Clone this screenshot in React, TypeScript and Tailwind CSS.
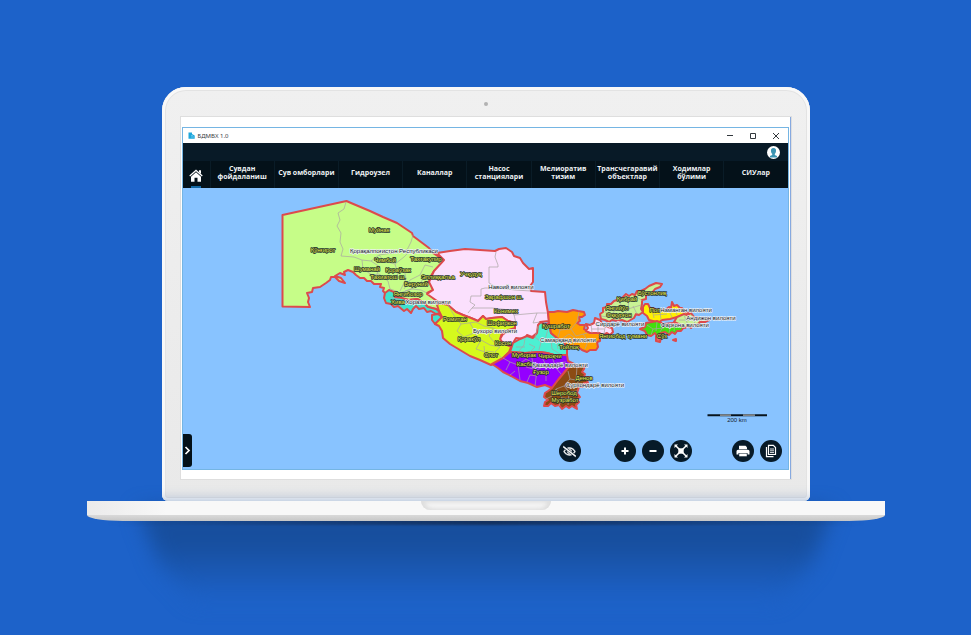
import { FaRegEyeSlash } from 'react-icons/fa';
import type { ReactNode } from 'react';

const sections = [
  ['Сувдан', 'фойдаланиш'],
  ['Сув омборлари'],
  ['Гидроузел'],
  ['Каналлар'],
  ['Насос', 'станциялари'],
  ['Мелиоратив', 'тизим'],
  ['Трансчегаравий', 'объектлар'],
  ['Ходимлар', 'бўлими'],
  ['СИУлар'],
];

const regions = [
  { name: 'Қорақалпоғистон', fill: '#c6fd88', d: 'M282.500 215L346.500 201L351 203L370 211L383 217L397 223L403 227L412 233L413 236L421 242L429 248L433 253L444 260L440 266L434 271L431 276L429 282L432 286L433 290L427 293L436 300L441 306L444 312L441 314L436 309L428 307L424 303L418 299L408 300L400 298L393 297L385 293L383 291L384 288L380 287L381 284L374 284L371 281L367 281L364 278L360 278L356 275L353 272L348 270L344 272L345 275L340 273L335 276L341 278L345 283L339 281L335 277L331 277L330 280L326 283L320 287L313 288L312 292L307 293L309 298L308 302L310 307L282.500 306.500Z' },
  { name: 'Хоразм', fill: '#3fe3cf', d: 'M385 293L389 290L394 292L395 297L402 298L409 300L417 299L424 303L428 307L436 309L441 313L436 314L431 311L427 312L424 308L419 309L416 306L413 309L411 313L407 309L404 311L398 306L394 307L391 304L386 303L384 298Z' },
  { name: 'Тупроққалъа', fill: '#3fe3cf', d: 'M432 315L438 314L442 317L439 321L435 324L432 320Z' },
  { name: 'Навоий', fill: '#fbe0fd', d: 'M437 253L450 251L465 249L480 250L495 251L499 249L506 248L512 252L514 256L520 258L523 263L529 269L533 268L533 282L530 286L531 291L545 292L546 302L548 313L549 321L540 322L537 333L532 337L527 335L525 339L516 338L513 343L511 347L507 344L501 343L500 339L503 334L511 330L515 329L515 323L508 321L502 317L492 318L486 319L483 316L478 321L471 318L463 315L456 312L450 307L440 303L427 294L433 290L429 282L434 271L444 260Z' },
  { name: 'Бухоро', fill: '#d6f91d', d: 'M437 305L440 303L448 305L456 312L463 315L471 318L478 321L483 316L486 319L492 318L502 317L508 321L515 323L515 328L508 330L502 333L500 339L503 343L511 347L509 352L503 358L496 363L491 365L480 360L470 356L460 350L450 344L443 338L442 331L439 326L435 324L442 317L439 311Z' },
  { name: 'Самарқанд', fill: '#4cf0d2', d: 'M541 322L545 325L549 323L551 333L557 338L564 342L567 349L567 355L554 355L547 353L540 352L525 353L510 352L513 343L520 339L527 336L533 338L537 333L538 325Z' },
  { name: 'Жиззах', fill: '#ff9f00', d: 'M548 312L554 312L558 311L567 312L573 310L578 311L584 312L585 315L582 317L579 317L580 321L577 323L580 325L585 325L584 329L588 331L592 333L597 333L600 331L606 333L606 336L600 337L600 341L597 342L598 347L596 350L590 350L587 352L582 350L577 346L567 347L564 342L557 338L551 333L549 323Z' },
  { name: 'Сирдарё', fill: '#fbe0fd', d: 'M586 324L590 325L594 323L595 318L600 320L604 326L608 327L612 328L613 332L610 335L607 333L603 335L599 333L590 333L586 331L588 328Z' },
  { name: 'Тошкент', fill: '#c9f294', d: 'M600 314L603 312L603 308L607 307L607 304L611 304L614 301L620 299L623 297L626 294L629 296L632 294L635 295L637 291L641 291L645 289L649 286L656 283L662 284L660 287L655 289L651 294L646 295L646 299L642 300L642 304L641 309L643 312L639 315L636 314L634 318L627 322L622 320L617 321L612 320L609 322L605 320L601 319Z' },
  { name: 'Наманган', fill: '#fff100', d: 'M643 307L645 304L648 304L650 308L653 308L657 310L661 309L664 311L669 307L671 308L672 302L674 306L677 305L680 308L682 308L684 312L690 313L684 316L677 317L670 319L662 320L658 323L653 321L649 320L647 316L643 313Z' },
  { name: 'Андижон', fill: '#c9f294', d: 'M677 317L684 314L687 315L691 313L694 317L697 317L700 320L704 318L709 320L705 322L700 322L697 325L694 325L691 328L688 326L685 328L681 325L674 322Z' },
  { name: 'Фарғона', fill: '#42e00c', d: 'M640 329L645 327L646 323L652 322L657 321L664 324L673 323L684 327L681 331L677 331L675 334L672 332L669 335L665 332L661 333L657 336L655 333L651 336L647 335L645 331Z' },
  { name: 'Сўх', fill: '#ec6a60', d: 'M656 336L661 337L660 342L656 341Z' },
  { name: 'Шоҳимардон', fill: '#ec6a60', d: 'M673 340L676 339L676 341Z' },
  { name: 'Қашқадарё', fill: '#9400ff', d: 'M492 364L503 358L510 352L525 353L540 352L547 353L554 355L567 355L568 361L574 364L568 368L563 374L558 380L552 388L545 385L537 387L528 383L520 381L511 376L503 372L498 368Z' },
  { name: 'Сурхондарё', fill: '#8b4b13', d: 'M574 364L577 367L580 366L585 365L584 369L582 372L585 374L584 377L589 377L587 380L588 383L584 383L583 387L579 387L577 393L580 397L577 399L579 402L576 405L577 409L572 406L569 408L566 406L562 409L559 405L555 406L551 403L548 406L544 406L545 402L548 400L544 397L545 393L548 391L552 388L558 380L563 374L568 368Z' },
];

const districtLines = [
  'M346 202L344 209L338 213L340 220L337 226L341 233L340 242L343 249L341 256L354 257L362 260L371 261L379 255L392 253L407 250L411 242L413 235',
  'M362 260L363 269L372 275L379 274L388 281L390 289M371 261L380 267L377 274M379 255L384 261L395 264L404 257L410 251M395 264L398 274L391 280M404 268L406 279L400 291M433 267L425 265L420 275L410 280L404 289M425 275L419 286L405 291M390 289L396 291L400 293L412 289L421 290L427 293',
  'M390 297L399 300L401 307M404 300L410 304L418 303M411 306L413 299M418 300L421 307',
  'M496 252L495 257L498 265L498 267L489 267L489 283L498 288L485 288L481 289L481 296L471 296L470 302L475 305L472 308L492 308L510 310L514 315L537 313L547 313M498 288L515 290L531 291M514 315L516 323M537 313L533 323L540 322M472 308L468 313',
  'M448 305L455 317L461 324L457 331L464 337M461 324L476 322L484 326L493 328L502 333M464 337L474 333L481 340L490 345L500 347M481 340L476 349L485 352L489 360M493 328L489 336L494 342M500 347L495 352L502 358M484 346L485 356M494 352L486 351M470 323L475 332M501 321L508 326L515 325',
  'M525 338L524 345L519 351M538 326L535 337L541 342L539 350M541 342L551 339L560 343M548 329L545 340M551 339L552 349L560 354M529 344L535 347L530 352M556 338L558 349M516 347L525 347',
  'M560 330L571 329L577 322L579 312M571 329L576 336L587 333M562 339L569 334L575 338L573 346M583 334L588 341L585 349M589 341L597 341M553 324L560 330L558 337',
  'M591 324L592 333M598 322L598 333M605 327L604 334M592 329L604 329',
  'M607 306L615 310L621 305L628 309L641 305M615 310L611 316L618 320M621 305L618 300M628 309L623 316L631 318M628 309L629 298M604 311L611 316M633 306L637 314M642 301L636 296M601 316L608 317',
  'M652 309L654 318M660 311L661 320M668 309L672 317M674 308L677 315M654 315L667 314M684 315L688 325M692 315L695 324M679 320L697 320',
  'M647 325L653 329L651 335M657 322L656 331M664 325L660 332M671 324L669 333M675 324L674 331M653 329L664 328',
  'M503 358L510 362L506 370M510 362L518 365L526 359L533 363L531 354M518 365L520 380M526 367L537 370L535 386M537 370L546 365L541 356M546 365L556 368L561 374M546 365L546 381M552 357L556 368M515 371L510 375M556 363L566 362M527 382L530 375L537 376',
  'M568 371L570 379L564 386L569 392L577 391M564 386L556 389L552 396L546 399M577 367L576 380L570 379M556 389L562 398L559 406M569 392L568 405M562 398L575 399M584 378L577 383',
];

const districtLabels: [string, number, number][] = [
  ['Муйнак', 379, 232],
  ['Қўнғирот', 323, 252],
  ['Чимбой', 385, 262],
  ['Тахтакупир', 426, 261],
  ['Шуманай', 367, 271],
  ['Қораўзак', 398, 272],
  ['Тахиатош ш.', 388, 279],
  ['Эллиққалъа', 438, 279],
  ['Беруний', 416, 286],
  ['Янгибозор', 408, 296],
  ['Хива', 398, 304],
  ['Учқудуқ', 471, 276],
  ['Зарафшон ш.', 504, 299],
  ['Конимех', 506, 313],
  ['Ромитан', 455, 321],
  ['Шофиркон', 502, 325],
  ['Қоракўл', 469, 341],
  ['Косон', 503, 345],
  ['Олот', 491, 357],
  ['Қушработ', 556, 328],
  ['Тойлоқ', 569, 349],
  ['Муборак', 524, 357],
  ['Чироқчи', 550, 358],
  ['Касби', 525, 366],
  ['Ғузор', 541, 374],
  ['Денов', 584, 380],
  ['Шеробод', 564, 395],
  ['Музработ', 565, 402],
  ['Бўстонлиқ', 652, 295],
  ['Қибрай', 627, 301],
  ['Янгийўл', 617, 310],
  ['Оққурғон', 619, 317],
  ['Янгиобод тумани', 623, 338],
  ['Поп', 655, 312],
  ['Сўх', 662, 338],
];

const provinceLabels: [string, number, number][] = [
  ['Қорақалпоғистон Республикаси', 394, 253],
  ['Хоразм вилояти', 428, 304],
  ['Навоий вилояти', 511, 289],
  ['Бухоро вилояти', 495, 333],
  ['Самарқанд вилояти', 568, 342],
  ['Қашқадарё вилояти', 560, 367],
  ['Сурхондарё вилояти', 595, 387],
  ['Сирдарё вилояти', 620, 326],
  ['Наманган вилояти', 686, 312],
  ['Андижон вилояти', 711, 320],
  ['Фарғона вилояти', 685, 327],
];

function RegionMap() {
  return (
    <svg viewBox="183 188 605 281" className="block h-auto w-full bg-[#88c3ff]" role="img" aria-label="Харита">
      {regions.map((r) => (
        <path key={r.name} d={r.d} fill={r.fill} stroke="#dd4a4c" strokeWidth="2" strokeLinejoin="round" />
      ))}
      {districtLines.map((d) => (
        <path key={d} d={d} fill="none" stroke="#a9a5a2" strokeWidth="0.7" strokeLinejoin="round" />
      ))}
      <g className="font-['Liberation_Sans','DejaVu_Sans',sans-serif] text-[6px] [paint-order:stroke]" textAnchor="middle" strokeLinejoin="round">
        <g fill="#eef04c" stroke="#23302c" strokeWidth="1.5">
          {districtLabels.map(([t, x, y]) => (
            <text key={t} x={x} y={y}>{t}</text>
          ))}
        </g>
        <g fill="#14171c" stroke="#eef1f5" strokeWidth="1.3">
          {provinceLabels.map(([t, x, y]) => (
            <text key={t} x={x} y={y}>{t}</text>
          ))}
        </g>
        <text x="737" y="422" fill="#15222e">200 km</text>
      </g>
      <path d="M707.500 415.200H767" stroke="#08141d" strokeWidth="2" />
      <path d="M720 415.200H731M743 415.200H755" stroke="#a9a9a9" strokeWidth="1.200" />
    </svg>
  );
}

function RoundButton({ label, children }: { label: string; children: ReactNode }) {
  return (
    <button type="button" aria-label={label} className="flex size-[22px] items-center justify-center rounded-full bg-[#071a28] text-white">
      {children}
    </button>
  );
}

function MapControls() {
  return (
    <div className="absolute right-[6px] bottom-[7px] flex">
      <RoundButton label="Яшириш">
        <FaRegEyeSlash className="size-[13px]" stroke="currentColor" strokeWidth="24" />
      </RoundButton>
      <div className="ml-[33px] flex gap-[6px]">
        <RoundButton label="Катталаштириш">
          <svg viewBox="0 0 12 12" className="size-3"><path d="M6 2.500V9.500M2.500 6H9.500" stroke="currentColor" strokeWidth="2" /></svg>
        </RoundButton>
        <RoundButton label="Кичиклаштириш">
          <svg viewBox="0 0 12 12" className="size-3"><path d="M2.500 6H9.500" stroke="currentColor" strokeWidth="2" /></svg>
        </RoundButton>
        <RoundButton label="Тўлиқ экран">
          <svg viewBox="0 0 14 14" className="size-[14px]" fill="currentColor">
            <path d="M4.300 4.300H9.700V9.700H4.300Z" />
            <path d="M2 2L12 12M12 2L2 12" stroke="currentColor" strokeWidth="1.500" />
            <path d="M.500 .500H4L.500 4ZM13.500 .500V4L10 .500ZM.500 13.500V10L4 13.500ZM13.500 13.500H10L13.500 10Z" />
          </svg>
        </RoundButton>
      </div>
      <div className="ml-10 flex gap-[6px]">
        <RoundButton label="Чоп этиш">
          <svg viewBox="0 0 14 12" className="h-3 w-[14px]" fill="currentColor">
            <path d="M3 .800H9.500L11 2.300V4.300H3Z" />
            <path d="M2 4.700H12A1.500 1.500 0 0 1 13.500 6.200V9.500H11.500V8H2.500V9.500H.500V6.200A1.500 1.500 0 0 1 2 4.700Z" />
            <path d="M3.200 8.500H10.800V11.300H3.200Z" />
          </svg>
        </RoundButton>
        <RoundButton label="Нусхалаш">
          <svg viewBox="0 0 12 14" className="h-[14px] w-3" fill="none" stroke="currentColor">
            <path d="M3.500 1.300H8.300L10.500 3.500V10.500H3.500Z" strokeWidth="1.200" />
            <path d="M1.500 3V12.700H8.500" strokeWidth="1.200" />
            <path d="M5 5H9M5 6.800H9M5 8.600H9" strokeWidth=".9" />
          </svg>
        </RoundButton>
      </div>
    </div>
  );
}

function TitleBar() {
  return (
    <div className="flex h-[15px] items-center bg-white pr-[6px] pl-[5px] text-[#33383d]">
      <svg viewBox="0 0 7 7" className="mr-[3px] size-[7px]" aria-hidden="true">
        <path d="M.500 .500H4V2L6.700 3.500V6.700H.500Z" fill="#1ea7dc" />
        <path d="M3 3.500H5M3 5H6" stroke="#8ad6f2" strokeWidth=".6" />
      </svg>
      <h1 className="flex-1 font-['Noto_Sans',sans-serif] text-[6px] leading-[8px]">БДМВХ 1.0</h1>
      <div className="flex gap-[11px]">
        <button type="button" aria-label="Йиғиш" className="size-3"><svg viewBox="0 0 12 12"><path d="M3 5.500H9" stroke="currentColor" /></svg></button>
        <button type="button" aria-label="Ёйиш" className="size-3"><svg viewBox="0 0 12 12"><path d="M3.500 3.500H8.500V8.500H3.500Z" fill="none" stroke="currentColor" /></svg></button>
        <button type="button" aria-label="Ёпиш" className="size-3"><svg viewBox="0 0 12 12"><path d="M3 3L9 9M9 3L3 9" stroke="currentColor" /></svg></button>
      </div>
    </div>
  );
}

function AppWindow() {
  return (
    <div className="border border-[#75b5e3] bg-white">
      <TitleBar />
      <header className="bg-[#081a27]">
        <div className="flex h-[18px] items-center justify-end pr-2">
          <button type="button" aria-label="Профил" className="size-[13px] overflow-hidden rounded-full bg-white">
            <svg viewBox="0 0 13 13" fill="#3c95b3">
              <path d="M6.500 2C8.600 2 9.300 3.300 9 5.200C8.800 6.600 8.200 7.300 7.800 7.800V9L10 10V11.500H3V10L5.200 9V7.800C4.700 7.300 4.200 6.600 4 5.200C3.700 3.300 4.400 2 6.500 2Z" />
            </svg>
          </button>
        </div>
        <nav className="flex h-[27px] bg-[#041119]">
          <a href="#home" aria-label="Бош саҳифа" className="flex w-7 flex-col items-center justify-end border-r border-[#0a1c27] text-white">
            <svg viewBox="0 0 14 13" className="mb-1 h-[13px] w-[14px]" fill="currentColor">
              <path d="M7 .500L13.700 6.600L12.900 7.500L7 2.200L1.100 7.500L.300 6.600Z" />
              <path d="M10 1.300H12V5L10 3.200Z" />
              <path d="M7 3.200L12 7.700V12.800H8.500V8.800H5.500V12.800H2V7.700Z" />
            </svg>
            <span className="h-[2px] w-[10px] bg-[#1268a4]" />
          </a>
          {sections.map((lines) => (
            <a
              key={lines[0]}
              href="#section"
              className="flex flex-1 basis-0 flex-col items-center justify-center border-r border-[#0a1c27] pb-1 font-['Open_Sans',sans-serif] text-[7px] leading-[8px] font-bold whitespace-nowrap text-[#edf0f2] last:border-r-0"
            >
              {lines.map((line) => (
                <span key={line}>{line}</span>
              ))}
            </a>
          ))}
        </nav>
      </header>
      <main className="relative">
        <RegionMap />
        <button type="button" aria-label="Панелни очиш" className="absolute bottom-[2px] left-0 flex h-[33px] w-[9px] items-center justify-center rounded-r-[3px] bg-[#041119] text-white">
          <svg viewBox="0 0 7 9" className="h-[9px] w-[7px]" fill="none"><path d="M1.500 1L5 4.500L1.500 8" stroke="currentColor" strokeWidth="1.700" /></svg>
        </button>
        <MapControls />
      </main>
    </div>
  );
}

export default function App() {
  return (
    <div className="flex min-h-screen flex-col items-center overflow-hidden bg-[#1d62c9] pt-[87px]">
      <div className="flex w-full max-w-[798px] flex-col items-center">
        <div className="relative w-[648px] max-w-full rounded-t-[24px] rounded-b-[6px] bg-linear-to-b from-[#f0f0f0] to-[#e9e9e9] px-[19px] pt-[30px] pb-[22px] shadow-[inset_0_0_0_3px_#f8f8f8,inset_0_0_0_4px_#e3e3e3]">
          <span className="absolute top-[15px] left-1/2 size-1 -translate-x-1/2 rounded-full bg-[#b2b2b2]" />
          <div className="border-r border-[#86a9e0] bg-white pt-[10px] pr-px pb-[9px] pl-px shadow-[0_0_0_1px_#dedede]">
            <AppWindow />
          </div>
        </div>
        <div className="relative flex w-full flex-col">
          <div className="absolute inset-x-[52px] top-2 blur-[10px]">
            <div className="h-[92px] bg-linear-to-b from-[#174e9d] from-35% to-[#1d62c9] [clip-path:polygon(0_0,100%_0,97%_60%,92%_100%,8%_100%,3%_60%)]" />
          </div>
          <div className="absolute inset-x-5 top-4 h-2 bg-linear-to-r from-transparent via-[#14315f] to-transparent blur-[1px]" />
          <div className="relative flex flex-col items-center overflow-hidden rounded-b-[36px_6px]">
            <div className="flex h-[14px] w-full justify-center bg-linear-to-r from-[#ebebeb] via-[#f8f8f8] via-10% to-[#f8f8f8] to-50%">
              <div className="h-[9px] w-[130px] rounded-b-[9px] bg-[#f3f3f3] shadow-[inset_4px_0_4px_#dedede,inset_-4px_0_4px_#dedede]" />
            </div>
            <div className="h-[6px] w-full bg-linear-to-b from-[#dadada] to-[#c6c6c6]" />
          </div>
        </div>
      </div>
    </div>
  );
}
